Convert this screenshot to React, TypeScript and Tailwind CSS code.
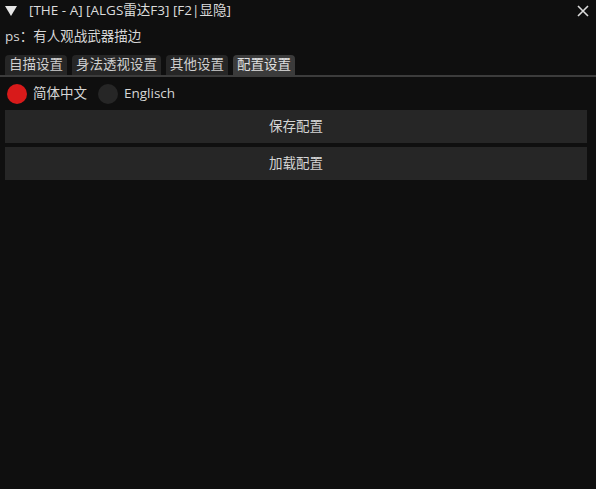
import React, { useState } from "react";

const font = { fontFamily: '"Open Sans", "Noto Sans CJK SC", sans-serif' };

export default function App() {
  const [tab, setTab] = useState(3);
  const [lang, setLang] = useState(0);
  const tabs = ["自描设置", "身法透视设置", "其他设置", "配置设置"];

  return (
    <div
      className="w-[596px] h-[489px] bg-[#0f0f0f] text-[#d6d6d6] text-[13.5px] leading-none overflow-hidden"
      style={font}
    >
      {/* title bar */}
      <div className="flex items-center h-[22px] pl-[5px] pr-[6px]">
        <svg width="12" height="10" viewBox="0 0 12 10" className="mr-[12px]">
          <polygon points="0,0 12,0 6,10" fill="#e6e6e6" />
        </svg>
        <span className="text-[#dcdcdc]">[THE - A] [ALGS雷达F3] [F2|显隐]</span>
        <svg width="12" height="12" viewBox="0 0 12 12" className="ml-auto mr-[1px]">
          <path d="M1 1 L11 11 M11 1 L1 11" stroke="#dcdcdc" strokeWidth="1.6" />
        </svg>
      </div>

      {/* hint */}
      <div className="h-[33px] flex items-center pl-[5px] pb-[3px]">ps：有人观战武器描边</div>

      {/* tabs */}
      <div className="flex gap-[5px] px-[5px] border-b-2 border-[#3c3c3c]">
        {tabs.map((t, i) => (
          <button
            key={t}
            onClick={() => setTab(i)}
            className={`h-[20px] px-[4px] rounded-t-[4px] ${
              tab === i ? "bg-[#3b3b3b] text-[#e0e0e0]" : "bg-[#262626] text-[#cfcfcf]"
            }`}
          >
            {t}
          </button>
        ))}
      </div>

      {/* language radio */}
      <div className="flex items-center h-[33px] pl-[7px]">
        {["简体中文", "Englisch"].map((l, i) => (
          <button key={l} onClick={() => setLang(i)} className="flex items-center mr-[11px]">
            <span
              className={`w-[20px] h-[20px] rounded-full ${
                lang === i ? "bg-[#d81a1a]" : "bg-[#262626]"
              }`}
            />
            <span className="ml-[6px] text-[#d6d6d6]">{l}</span>
          </button>
        ))}
      </div>

      {/* actions */}
      <div className="flex flex-col gap-[4px] px-[5px] pr-[9px]">
        <button className="h-[33px] bg-[#262626] text-[#d6d6d6]">保存配置</button>
        <button className="h-[33px] bg-[#262626] text-[#d6d6d6]">加载配置</button>
      </div>
    </div>
  );
}
